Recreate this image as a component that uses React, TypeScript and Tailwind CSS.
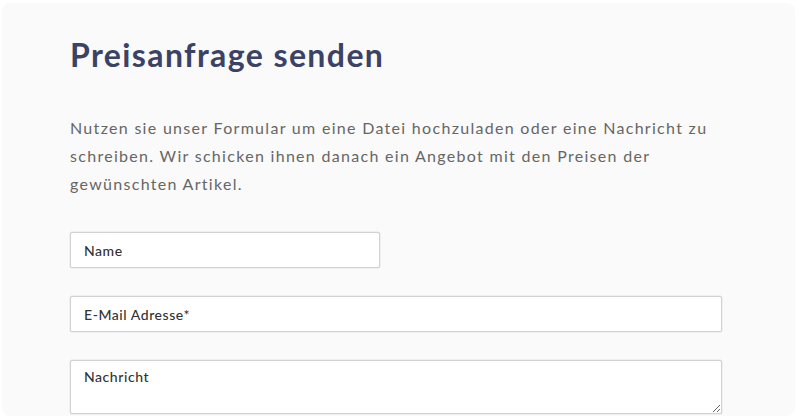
import React from "react";

export default function App() {
  return (
    <div className="w-[800px] h-[418px] bg-white overflow-hidden" style={{ fontFamily: "Lato, 'Open Sans', sans-serif" }}>
      <div className="ml-[2px] mr-[5px] mt-[3px] h-[413px] rounded-lg bg-[#fafafa] pl-[68px] pt-[34px]">
        <h1 className="text-[32px] leading-[36px] font-bold text-[#3a4266] tracking-[1.4px]">
          Preisanfrage senden
        </h1>
        <p className="mt-[41px] w-[670px] text-[16px] leading-[28px] text-[#666666] tracking-[1.3px]">
          Nutzen sie unser Formular um eine Datei hochzuladen oder eine Nachricht zu schreiben. Wir schicken ihnen danach ein Angebot mit den Preisen der gewünschten Artikel.
        </p>
        <form className="mt-[34px] flex flex-col gap-[28px]" onSubmit={(e) => e.preventDefault()}>
          <input
            type="text"
            placeholder="Name"
            className="w-[310px] h-[36px] px-[13px] rounded-[2px] border border-[#d2d2d2] bg-white text-[14px] font-medium tracking-[0.55px] text-[#333] placeholder:text-[#333] outline-none shadow-[0_0_0_0.5px_#e4e4e4]"
          />
          <input
            type="email"
            placeholder="E-Mail Adresse*"
            className="w-[652px] h-[36px] px-[13px] rounded-[2px] border border-[#d2d2d2] bg-white text-[14px] font-medium tracking-[0.55px] text-[#333] placeholder:text-[#333] outline-none shadow-[0_0_0_0.5px_#e4e4e4]"
          />
          <textarea
            placeholder="Nachricht"
            className="w-[652px] h-[54px] px-[13px] pt-[5px] rounded-[2px] border border-[#d2d2d2] bg-white text-[14px] font-medium tracking-[0.55px] text-[#333] placeholder:text-[#333] outline-none shadow-[0_0_0_0.5px_#e4e4e4]"
          />
        </form>
      </div>
    </div>
  );
}
